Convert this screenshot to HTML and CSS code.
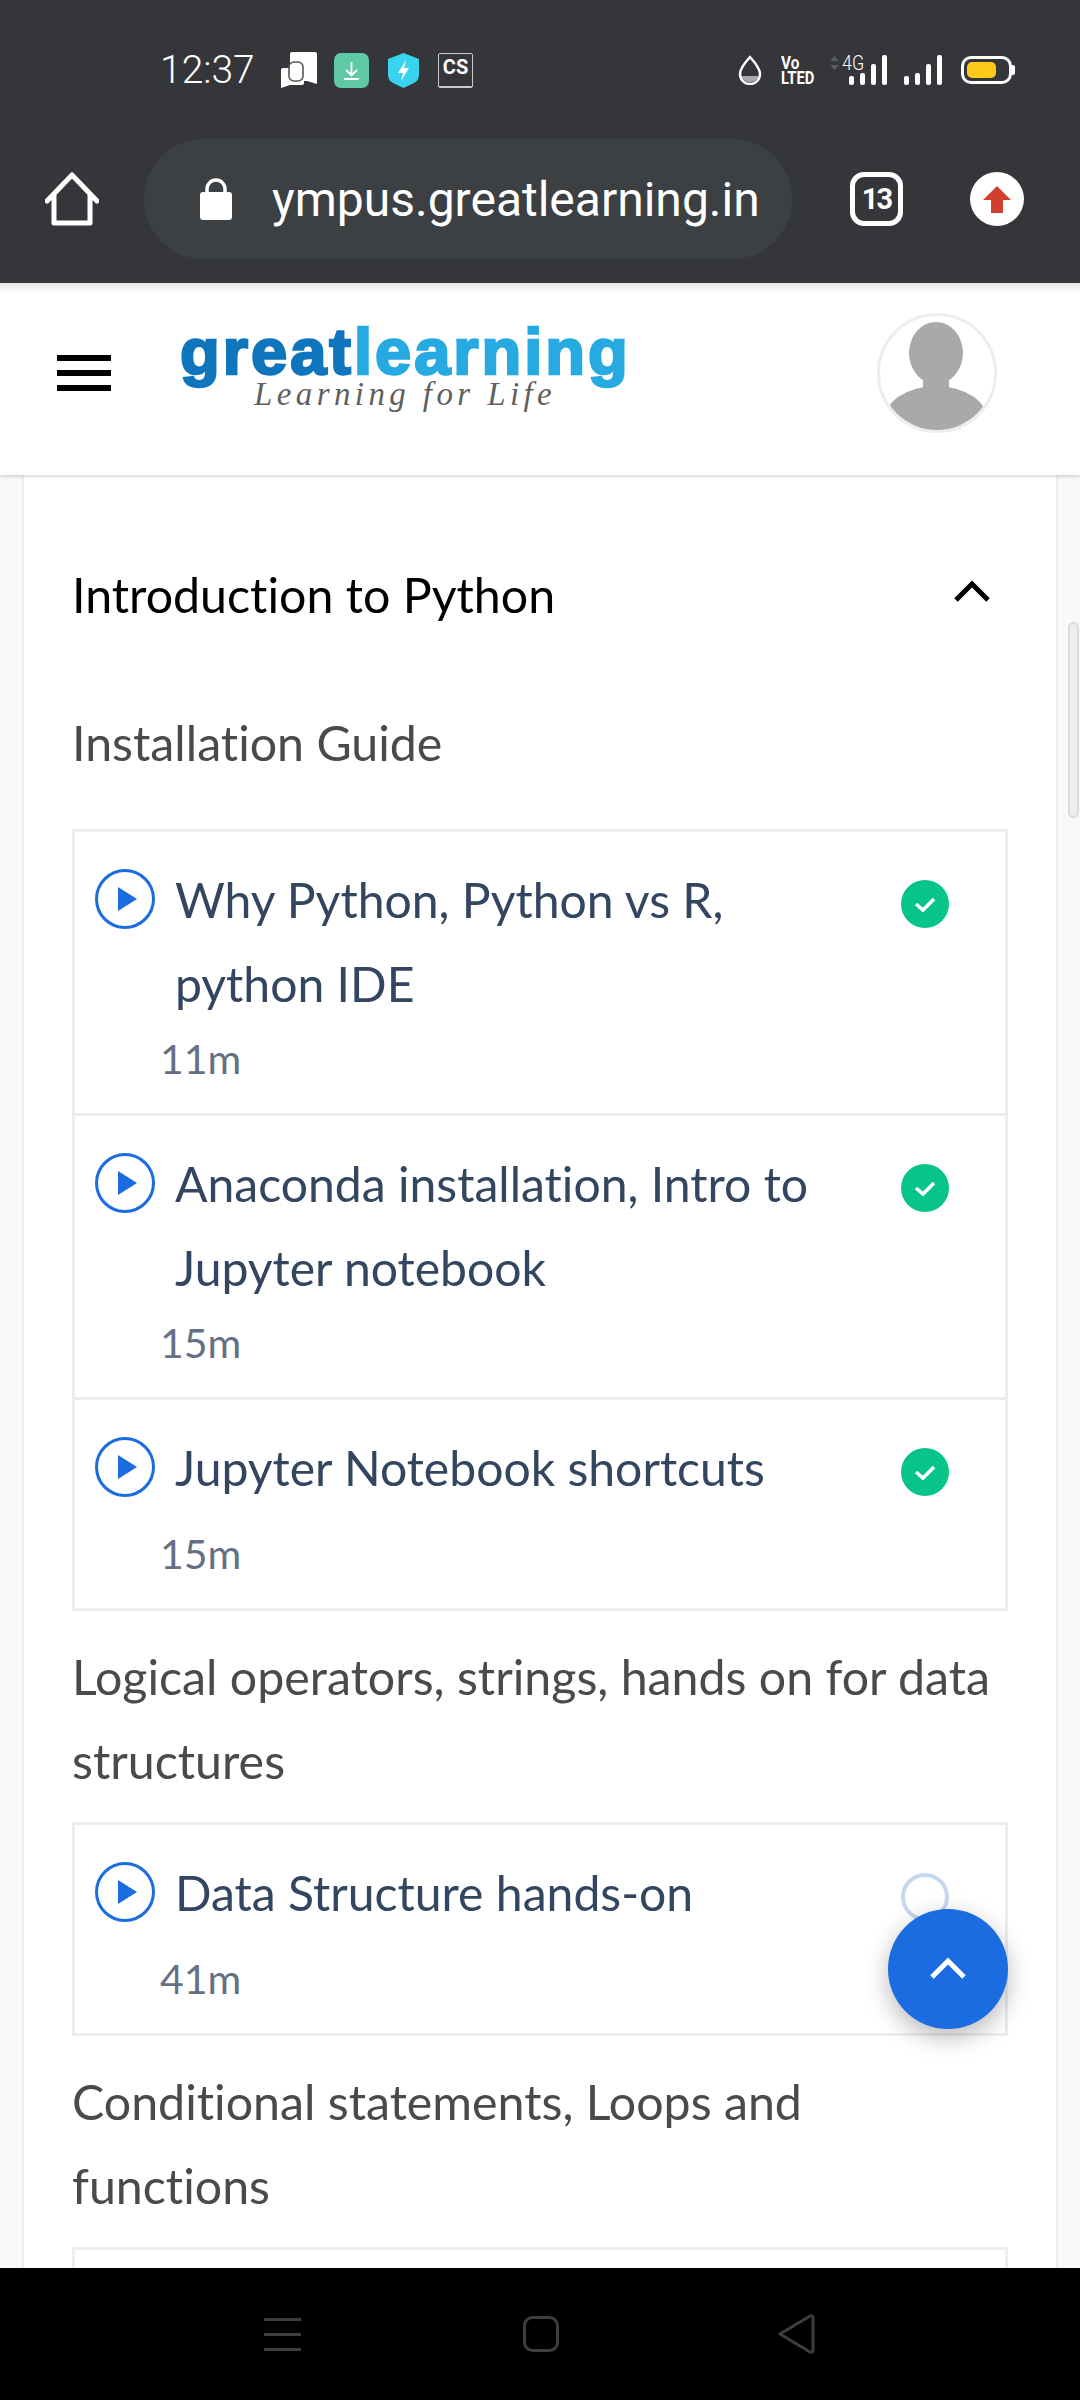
FILE: index.html
```html
<!DOCTYPE html>
<html lang="en">
<head>
  <meta charset="UTF-8">
  <title>Introduction to Python</title>
  <link rel="stylesheet" href="styles.css">
</head>
<body>
<div class="page">
  <div class="chrome">
    <div class="status-bar">
      <span class="clock">12:37</span>
      <svg class="ic-chat" viewBox="0 0 36 36"><path d="M9 2q0-2 2-2h23q2 0 2 2v30l-10-3H12V24H9z" fill="#fff"/><path d="M2 16h19q2 0 2 2v13q0 2-2 2H9l-9 3V18q0-2 2-2z" fill="#fff"/><rect x="8" y="10" width="14" height="19" rx="5" fill="none" stroke="#55575b" stroke-width="1.6"/></svg>
      <svg class="ic-dl" viewBox="0 0 35 35"><rect width="35" height="35" rx="7" fill="#5fc9a7"/><path d="M17.500 9v13M12 17l5.500 5.500L23 17M10 26h15" fill="none" stroke="#fff" stroke-width="1.800"/></svg>
      <svg class="ic-shield" viewBox="0 0 31 35"><path d="M15.500 0L31 6v16q0 5-5 8l-10.500 5L5 30q-5-3-5-8V6z" fill="#38d4ef"/><path d="M18 7l-8 13h5l-2 8 8-13h-5z" fill="#fff"/></svg>
      <span class="ic-cs">CS</span>
      <div class="status-right">
        <svg class="ic-drop" viewBox="0 0 24 30"><path d="M12 2Q2 13 2 19a10 10 0 0 0 20 0Q22 13 12 2z" fill="none" stroke="#fff" stroke-width="2.500"/><path d="M3.500 21h17a9 9 0 0 1-17 0z" fill="#a9aaac"/></svg>
        <div class="volte"><span class="volte-top">Vo</span><span class="volte-bottom">LTED</span></div>
        <div class="net">
          <svg class="net-arrows" viewBox="0 0 9 16"><path d="M0 6l4.500-5L9 6zM0 10l4.500 5L9 10z" fill="#5a5b5e"/></svg>
          <span class="net-label">4G</span>
          <div class="bars"><i class="b1"></i><i class="b2"></i><i class="b3"></i><i class="b4"></i></div>
        </div>
        <div class="bars sim2"><i class="b1"></i><i class="b2"></i><i class="b3"></i><i class="b4"></i></div>
        <div class="battery"><div class="battery-fill"></div></div>
      </div>
    </div>
    <div class="toolbar">
      <svg class="ic-home" viewBox="0 0 54 54"><path d="M2 29L27 3l25 26M9 23v28h36V23" fill="none" stroke="#fff" stroke-width="5" stroke-linejoin="round" stroke-linecap="round"/></svg>
      <div class="omnibox">
        <svg class="ic-lock" viewBox="0 0 32 42"><path d="M7 16V11a9 9 0 0 1 18 0v5" fill="none" stroke="#fff" stroke-width="3.500"/><rect y="14" width="32" height="28" rx="3" fill="#fff"/></svg>
        <span class="url">ympus.greatlearning.in</span>
      </div>
      <div class="tab-count">13</div>
      <svg class="ic-upload" viewBox="0 0 54 54"><circle cx="27" cy="27" r="27" fill="#fff"/><path d="M27 14L41 28H33V41H21V28H13z" fill="#d13f2f"/></svg>
    </div>
  </div>

  <header class="site-header">
    <svg class="ic-menu" viewBox="0 0 54 36"><path d="M0 0h54v6H0zM0 15h54v6H0zM0 30h54v6H0z" fill="#000"/></svg>
    <div class="logo">
      <div class="logo-name"><span class="logo-great">great</span><span class="logo-learning">learning</span></div>
      <div class="logo-tag">Learning for Life</div>
    </div>
    <svg class="avatar" viewBox="0 0 120 120">
      <clipPath id="avatarClip"><circle cx="60" cy="60" r="57"/></clipPath>
      <circle cx="60" cy="60" r="58.500" fill="#fff" stroke="#ecedf1" stroke-width="3"/>
      <g clip-path="url(#avatarClip)" fill="#a9a9a9">
        <ellipse cx="59" cy="40" rx="27" ry="31"/>
        <rect x="46" y="60" width="26" height="20"/>
        <ellipse cx="59" cy="108" rx="52" ry="35"/>
      </g>
    </svg>
  </header>

  <main class="content">
    <div class="card">
      <div class="module-row">
        <span class="module-title">Introduction to Python</span>
        <svg class="ic-chevron" viewBox="0 0 36 22"><path d="M2 20L18 4l16 16" fill="none" stroke="#000" stroke-width="5"/></svg>
      </div>

      <h2 class="group-title first">Installation Guide</h2>
      <div class="lesson-box">
        <div class="lesson">
          <div class="lesson-main">
            <svg class="ic-play" viewBox="0 0 60 60"><circle cx="30" cy="30" r="28.500" fill="none" stroke="#1a6ce0" stroke-width="3"/><path d="M23 18l19 12-19 12z" fill="#1a6ce0"/></svg>
            <div class="lesson-title">Why Python, Python vs R, python IDE</div>
            <svg class="ic-done" viewBox="0 0 48 48"><circle cx="24" cy="24" r="24" fill="#06c48a"/><path d="M15 24l7 6 11-11" fill="none" stroke="#fff" stroke-width="3.500"/></svg>
          </div>
          <div class="lesson-time">11m</div>
        </div>
        <div class="lesson">
          <div class="lesson-main">
            <svg class="ic-play" viewBox="0 0 60 60"><circle cx="30" cy="30" r="28.500" fill="none" stroke="#1a6ce0" stroke-width="3"/><path d="M23 18l19 12-19 12z" fill="#1a6ce0"/></svg>
            <div class="lesson-title">Anaconda installation, Intro to Jupyter notebook</div>
            <svg class="ic-done" viewBox="0 0 48 48"><circle cx="24" cy="24" r="24" fill="#06c48a"/><path d="M15 24l7 6 11-11" fill="none" stroke="#fff" stroke-width="3.500"/></svg>
          </div>
          <div class="lesson-time">15m</div>
        </div>
        <div class="lesson">
          <div class="lesson-main">
            <svg class="ic-play" viewBox="0 0 60 60"><circle cx="30" cy="30" r="28.500" fill="none" stroke="#1a6ce0" stroke-width="3"/><path d="M23 18l19 12-19 12z" fill="#1a6ce0"/></svg>
            <div class="lesson-title">Jupyter Notebook shortcuts</div>
            <svg class="ic-done" viewBox="0 0 48 48"><circle cx="24" cy="24" r="24" fill="#06c48a"/><path d="M15 24l7 6 11-11" fill="none" stroke="#fff" stroke-width="3.500"/></svg>
          </div>
          <div class="lesson-time">15m</div>
        </div>
      </div>

      <h2 class="group-title">Logical operators, strings, hands on for data structures</h2>
      <div class="lesson-box">
        <div class="lesson">
          <div class="lesson-main">
            <svg class="ic-play" viewBox="0 0 60 60"><circle cx="30" cy="30" r="28.500" fill="none" stroke="#1a6ce0" stroke-width="3"/><path d="M23 18l19 12-19 12z" fill="#1a6ce0"/></svg>
            <div class="lesson-title">Data Structure hands-on</div>
            <div class="ic-todo"></div>
          </div>
          <div class="lesson-time">41m</div>
        </div>
      </div>

      <h2 class="group-title">Conditional statements, Loops and functions</h2>
      <div class="lesson-box">
        <div class="lesson lesson-empty"></div>
      </div>
    </div>
  </main>

  <nav class="nav-bar">
    <svg class="nav-menu" viewBox="0 0 37 33"><path d="M0 0h37v3H0zM0 15h37v3H0zM0 30h37v3H0z" fill="#3d3d3d"/></svg>
    <svg class="nav-home" viewBox="0 0 36 36"><rect x="1.500" y="1.500" width="33" height="33" rx="8" fill="none" stroke="#3d3d3d" stroke-width="3"/></svg>
    <svg class="nav-back" viewBox="0 0 38 40"><path d="M3 20L33 2q3-1 3 2v32q0 3-3 2z" fill="none" stroke="#3d3d3d" stroke-width="3" stroke-linejoin="round"/></svg>
  </nav>

  <div class="scroll-thumb"></div>
  <button class="fab" type="button">
    <svg viewBox="0 0 36 22"><path d="M2 20L18 4l16 16" fill="none" stroke="#fff" stroke-width="5"/></svg>
  </button>
</div>
</body>
</html>
```
FILE: styles.css
```css
* {
  box-sizing: border-box;
}
body {
  margin: 0;
  font-family: Lato, sans-serif;
  font-variant-ligatures: none;
  background: #f8f9fb;
}
svg {
  display: block;
  flex: none;
}
.page {
  position: relative;
  width: 1080px;
  height: 2400px;
  display: flex;
  flex-direction: column;
  overflow: hidden;
}

/* phone + browser bars */
.chrome {
  background: #35363a;
  height: 283px;
  flex: none;
}
.status-bar {
  height: 139px;
  padding: 1px 68px 0 160px;
  display: flex;
  align-items: center;
  font-family: Roboto, sans-serif;
  color: #fff;
}
.clock {
  width: 94px;
  font-size: 39px;
  font-weight: 300;
  margin-right: 27px;
  white-space: nowrap;
}
.ic-chat { width: 36px; height: 36px; margin-right: 17px; }
.ic-dl { width: 35px; height: 35px; margin-right: 19px; }
.ic-shield { width: 31px; height: 35px; margin-right: 19px; }
.ic-cs {
  width: 35px;
  height: 35px;
  border: 1px solid #c9c9cb;
  border-radius: 2px;
  font-size: 20px;
  font-weight: 700;
  line-height: 26px;
  text-align: center;
  box-shadow: inset 0 -7px 0 -6px #c9c9cb;
}
.status-right {
  margin-left: auto;
  display: flex;
  align-items: center;
}
.ic-drop { width: 24px; height: 30px; margin-right: 19px; }
.volte {
  width: 35px;
  height: 30px;
  margin-right: 14px;
  font-weight: 700;
  white-space: nowrap;
}
.volte-top {
  display: block;
  font-size: 18px;
  line-height: 15px;
  transform: scaleX(0.85);
  transform-origin: left;
}
.volte-bottom {
  display: block;
  font-size: 18px;
  line-height: 15px;
  transform: scaleX(0.82);
  transform-origin: left;
}
.net {
  position: relative;
  width: 57px;
  height: 30px;
  margin-right: 17px;
}
.net-arrows {
  position: absolute;
  left: 0;
  top: 0;
  width: 9px;
  height: 16px;
}
.net-label {
  position: absolute;
  left: 12px;
  top: -1px;
  font-size: 21px;
  line-height: 18px;
  font-weight: 300;
  transform: scaleX(0.85);
  transform-origin: left;
}
.net .bars {
  position: absolute;
  right: 0;
  top: 0;
}
.bars {
  width: 38px;
  height: 30px;
  display: flex;
  justify-content: space-between;
  align-items: flex-end;
}
.bars i {
  width: 5px;
  background: #fff;
  border-radius: 2px;
}
.bars .b1 { height: 9px; }
.bars .b2 { height: 12px; }
.bars .b3 { height: 21px; }
.bars .b4 { height: 30px; }
.sim2 {
  margin-right: 19px;
}
.battery {
  width: 51px;
  height: 28px;
  border: 3px solid #fff;
  border-radius: 10px;
  padding: 3px 13px 3px 3px;
  position: relative;
}
.battery::after {
  content: "";
  position: absolute;
  right: -6px;
  top: 6px;
  width: 3px;
  height: 10px;
  background: #fff;
  border-radius: 0 2px 2px 0;
}
.battery-fill {
  height: 100%;
  background: #fdca1a;
  border-radius: 5px;
}

.toolbar {
  display: flex;
  align-items: center;
  height: 120px;
  padding-left: 45px;
}
.ic-home { width: 54px; height: 54px; margin-right: 45px; }
.omnibox {
  width: 648px;
  height: 120px;
  border-radius: 60px;
  background: #3c4043;
  padding-left: 56px;
  display: flex;
  align-items: center;
  margin-right: 58px;
}
.ic-lock { width: 32px; height: 42px; margin-right: 40px; }
.url {
  font-family: Roboto, sans-serif;
  font-size: 48px;
  color: #fff;
  white-space: nowrap;
}
.tab-count {
  width: 53px;
  height: 54px;
  border: 5px solid #fff;
  border-radius: 14px;
  color: #fff;
  font-family: Roboto, sans-serif;
  font-size: 29px;
  font-weight: 700;
  line-height: 44px;
  letter-spacing: -2px;
  text-align: center;
  margin-right: 67px;
}
.ic-upload { width: 54px; height: 54px; }

/* site header */
.site-header {
  flex: none;
  height: 192px;
  background: #fff;
  display: flex;
  align-items: center;
  padding-left: 57px;
  position: relative;
  z-index: 1;
  box-shadow: 0 2px 3px rgba(0, 0, 0, 0.14), inset 0 14px 10px -10px rgba(0, 0, 0, 0.12);
}
.ic-menu { width: 54px; height: 36px; margin-right: 69px; margin-top: -12px; }
.logo {
  width: 450px;
  margin-top: -24px;
}
.logo-name {
  font-family: "Liberation Sans", sans-serif;
  font-size: 65px;
  font-weight: 700;
  line-height: 55px;
  letter-spacing: 3px;
  white-space: nowrap;
  -webkit-text-stroke: 2.500px;
  paint-order: stroke;
}
.logo-great { color: #0f75bc; }
.logo-learning { color: #27aae1; }
.logo-tag {
  font-family: "Liberation Serif", serif;
  font-style: italic;
  font-size: 33px;
  line-height: 31px;
  letter-spacing: 4.400px;
  color: #5f5f5f;
  padding-left: 74px;
  white-space: nowrap;
}
.avatar {
  width: 120px;
  height: 120px;
  margin-left: 247px;
  margin-top: -13px;
}

/* course card */
.content {
  flex: 1;
  overflow: hidden;
  padding: 0 24px;
}
.card {
  background: #fff;
  padding: 77px 48px 0;
  box-shadow: 0 0 4px rgba(0, 0, 0, 0.14);
}
.module-row {
  display: flex;
  align-items: center;
  justify-content: space-between;
  height: 84px;
  padding-right: 18px;
  margin-bottom: 64px;
}
.module-title {
  font-size: 48.300px;
  color: #000;
}
.ic-chevron {
  width: 36px;
  height: 22px;
  margin-top: -6px;
}
.group-title {
  margin: 23px 0 20px;
  padding-right: 12px;
  font-size: 48.300px;
  font-weight: 400;
  line-height: 84px;
  color: #4a4a4a;
}
.group-title.first {
  margin-bottom: 45px;
}
.lesson-box {
  border: 3px solid #ecedf1;
}
.lesson {
  padding: 26px 0 21px;
  border-bottom: 3px solid #ecedf1;
}
.lesson:last-child {
  border-bottom: 0;
}
.lesson-empty {
  min-height: 100px;
}
.lesson-main {
  display: flex;
  align-items: flex-start;
  min-height: 95px;
  padding-left: 20px;
}
.ic-play {
  width: 60px;
  height: 60px;
  margin: 11px 20px 0 0;
}
.lesson-title {
  flex: 1;
  font-size: 48.100px;
  line-height: 84px;
  color: #33465f;
  padding-right: 60px;
}
.ic-done,
.ic-todo {
  width: 48px;
  height: 48px;
  margin: 22px 56px 0 0;
  flex: none;
}
.ic-todo {
  border: 4px solid #c5d8ef;
  border-radius: 50%;
}
.lesson-time {
  padding-left: 85px;
  font-size: 41px;
  line-height: 66px;
  color: #667085;
}

/* android nav */
.nav-bar {
  flex: none;
  height: 132px;
  background: #000;
  position: relative;
  z-index: 1;
  display: flex;
  align-items: center;
  padding: 0 0 0 264px;
}
.nav-menu { width: 37px; height: 33px; margin-right: 222px; }
.nav-home { width: 36px; height: 36px; margin-right: 218px; }
.nav-back { width: 38px; height: 40px; }

.scroll-thumb {
  position: absolute;
  left: 1068px;
  top: 622px;
  width: 11px;
  height: 196px;
  background: #efefef;
  border: 2px solid #dcdcdc;
  border-radius: 6px;
}
.fab {
  position: absolute;
  left: 888px;
  top: 1909px;
  width: 120px;
  height: 120px;
  padding: 0;
  border: 0;
  border-radius: 50%;
  background: #1a6ce0;
  box-shadow: 0 8px 24px rgba(0, 0, 0, 0.28);
  display: flex;
  align-items: center;
  justify-content: center;
}
.fab svg {
  width: 36px;
  height: 22px;
  margin-bottom: 3px;
}
```
